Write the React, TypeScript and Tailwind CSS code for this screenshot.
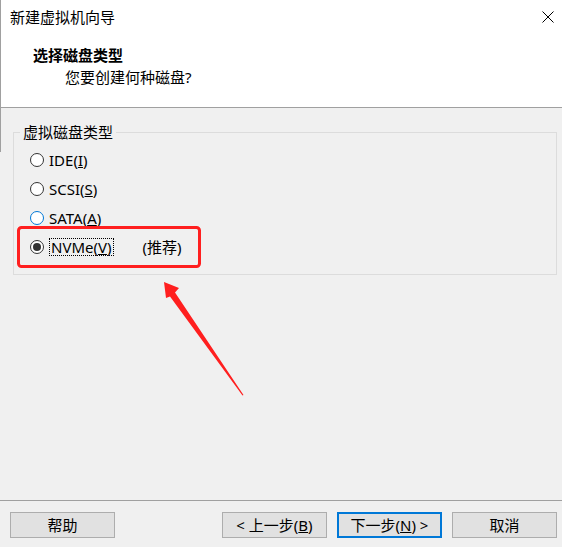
import React from "react";

const font = { fontFamily: '"Noto Sans", "Noto Sans CJK SC", sans-serif' };

function Radio({ checked, focus }: { checked?: boolean; focus?: boolean }) {
  return (
    <span
      className={`flex h-[14px] w-[14px] shrink-0 items-center justify-center rounded-full border bg-white ${
        focus ? "border-[#0078d7]" : "border-[#333333]"
      }`}
    >
      {checked && <span className="h-[8px] w-[8px] rounded-full bg-[#333333]" />}
    </span>
  );
}

function Btn({ children, primary }: { children: React.ReactNode; primary?: boolean }) {
  return (
    <button
      className={`flex h-[26px] w-[105px] items-center justify-center bg-[#e1e1e1] text-[15px] leading-[20px] text-black ${
        primary ? "border-2 border-[#0078d7]" : "border border-[#adadad]"
      }`}
    >
      {children}
    </button>
  );
}

export default function App() {
  return (
    <div
      className="relative flex h-[547px] w-[562px] flex-col overflow-hidden bg-[#f0f0f0] text-black"
      style={font}
    >
      <div className="absolute left-0 top-0 h-[152px] w-px bg-[#a0a0a0]" />
      <div className="flex h-[108px] flex-col border-b border-[#a0a0a0] bg-white">
        <div className="flex items-center justify-between pl-[10px] pr-[8px] pt-[7px]">
          <span className="text-[15px] leading-[20px]">新建虚拟机向导</span>
          <svg width="12" height="12" viewBox="0 0 12 12">
            <path d="M0.5 0.5 L11.5 11.5 M11.5 0.5 L0.5 11.5" stroke="#000" strokeWidth="1" />
          </svg>
        </div>
        <div className="mt-[18px] pl-[33px] text-[15px] font-bold leading-[20px]">选择磁盘类型</div>
        <div className="mt-[2px] pl-[65px] text-[15px] leading-[20px]">您要创建何种磁盘?</div>
      </div>

      <div className="flex-1 pt-[14px]">
        <fieldset className="ml-[13px] mr-[5px] border border-[#dcdcdc] pb-[13px] pt-[3px]">
          <legend className="ml-[6px] px-[3px] text-[15px] leading-[20px]">虚拟磁盘类型</legend>
          <div className="flex flex-col pl-[16px]">
            <div className="flex h-[29px] items-center gap-[5px] text-[15px] leading-[20px]">
              <Radio />
              <span>
                IDE(<span className="underline">I</span>)
              </span>
            </div>
            <div className="flex h-[29px] items-center gap-[5px] text-[15px] leading-[20px]">
              <Radio />
              <span>
                SCSI(<span className="underline">S</span>)
              </span>
            </div>
            <div className="flex h-[29px] items-center gap-[5px] text-[15px] leading-[20px]">
              <Radio focus />
              <span>
                SATA(<span className="underline">A</span>)
              </span>
            </div>
            <div className="flex h-[29px] items-center gap-[5px] text-[15px] leading-[20px]">
              <Radio checked />
              <span className="border border-dotted border-black px-px leading-[16px]">
                NVMe(<span className="underline">V</span>)
              </span>
              <span className="ml-[24px]">(推荐)</span>
            </div>
          </div>
        </fieldset>
      </div>

      <div className="flex h-[47px] items-start justify-between border-t border-[#a0a0a0] pl-[10px] pr-[5px] pt-[11px]">
        <Btn>帮助</Btn>
        <div className="flex gap-[10px]">
          <Btn>
            &lt; 上一步(<span className="underline">B</span>)
          </Btn>
          <Btn primary>
            下一步(<span className="underline">N</span>) &gt;
          </Btn>
          <Btn>取消</Btn>
        </div>
      </div>

      <svg className="pointer-events-none absolute left-0 top-0" width="562" height="547">
        <rect x="18.5" y="227.5" width="181" height="39" rx="3" fill="none" stroke="#ff1f1f" strokeWidth="3" />
        <polygon
          points="164,282 179,288 175,292.5 243.5,395 242.5,395.5 170,296.5 166,298"
          fill="#ff1f1f"
        />
      </svg>
    </div>
  );
}
